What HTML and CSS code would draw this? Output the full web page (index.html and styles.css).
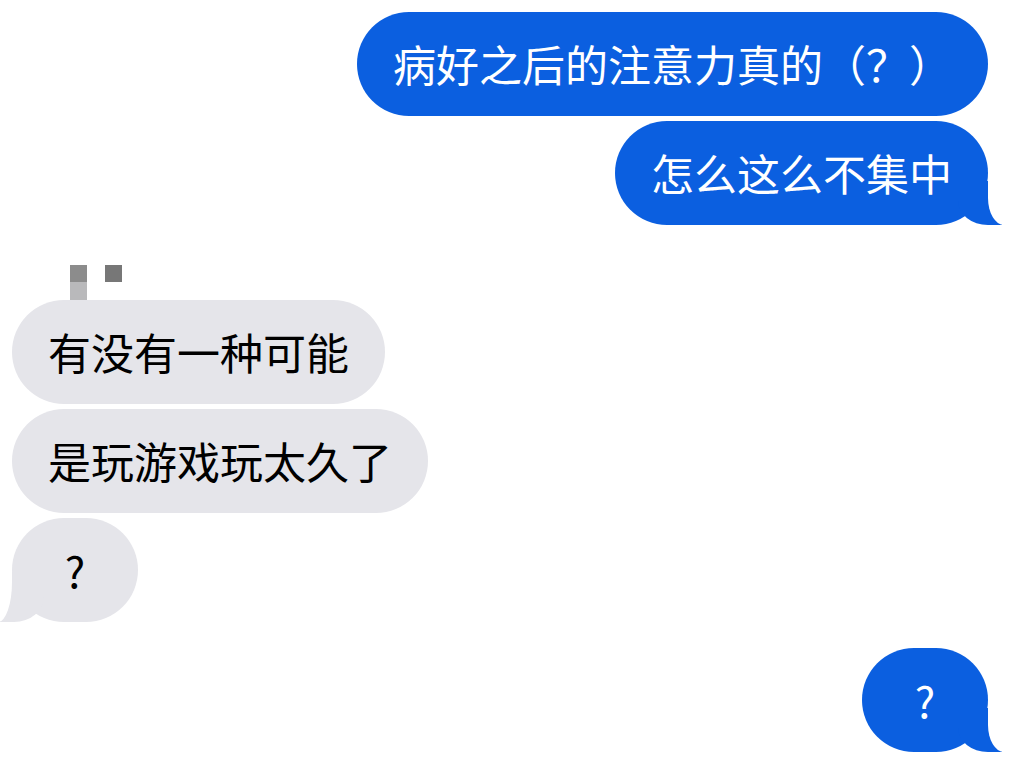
FILE: index.html
```
<!DOCTYPE html>
<html lang="zh-CN">
<head>
  <meta charset="UTF-8">
  <meta name="viewport" content="width=device-width, initial-scale=1.0">
  <title>Messages</title>
  <link rel="stylesheet" href="styles.css">
</head>
<body>

  <div class="chat">
    <div class="bubble sent">病好之后的注意力真的（？）</div>
    <div class="bubble sent tail">怎么这么不集中</div>

    <div class="sender">
      <span class="px px-a"></span>
      <span class="px px-b"></span>
    </div>
    <div class="bubble recv">有没有一种可能</div>
    <div class="bubble recv">是玩游戏玩太久了</div>
    <div class="bubble recv tail short">?</div>

    <div class="bubble sent tail short last">?</div>
  </div>

</body>
</html>
```

FILE: styles.css
```
* {
  box-sizing: border-box;
}
body {
  margin: 0;
  background: #fff;
  font-family: "Noto Sans CJK SC", "Noto Sans", sans-serif;
}
.chat {
  display: flex;
  flex-direction: column;
  padding: 12px 47px 0 12px;
  gap: 5px;
}
.bubble {
  position: relative;
  z-index: 0;
  height: 104px;
  padding: 0 36px;
  border-radius: 52px;
  font-size: 43px;
  line-height: 102px;
  white-space: nowrap;
}
.sent {
  align-self: flex-end;
  background: #0b5fe0;
  color: #fff;
}
.recv {
  align-self: flex-start;
  background: #e5e5ea;
  color: #000;
}
.short {
  min-width: 126px;
  text-align: center;
}
.last {
  margin-top: 21px;
}

/* tails */
.tail::before,
.tail::after {
  content: "";
  position: absolute;
  bottom: 0;
  z-index: -1;
}
.sent.tail::before {
  right: -14px;
  width: 44px;
  height: 44px;
  background: #0b5fe0;
  border-bottom-left-radius: 30px 24px;
}
.sent.tail::after {
  right: -40px;
  width: 40px;
  height: 44px;
  background: #fff;
  border-bottom-left-radius: 16px 27px;
}
.recv.tail::before {
  left: -12px;
  width: 44px;
  height: 50px;
  background: #e5e5ea;
  border-bottom-right-radius: 30px 26px;
}
.recv.tail::after {
  left: -40px;
  width: 40px;
  height: 50px;
  background: #fff;
  border-bottom-right-radius: 14px 40px;
}

/* blurred sender name */
.sender {
  display: flex;
  align-items: flex-start;
  height: 35px;
  margin: 35px 0 -5px 58px;
  gap: 18px;
}
.px {
  display: block;
  width: 17px;
}
.px-a {
  height: 35px;
  background: linear-gradient(#8c8c8c 50%, #b9b9bb 50%);
}
.px-b {
  height: 17px;
  background: #777;
}
```
